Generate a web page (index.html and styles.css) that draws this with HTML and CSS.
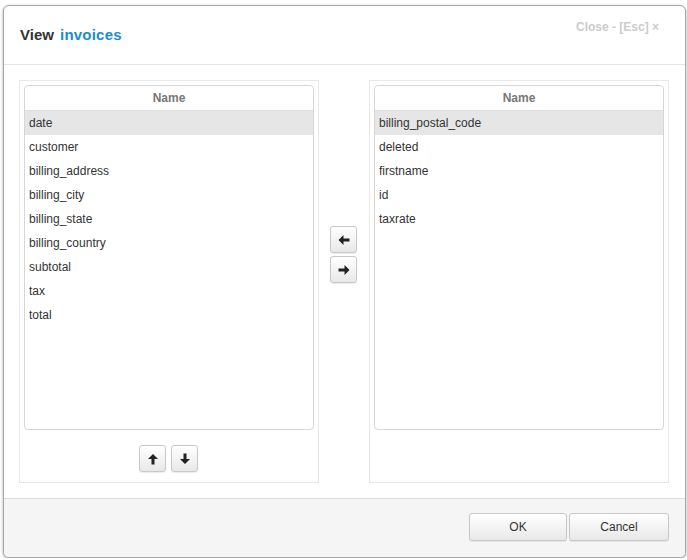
FILE: index.html
```html
<!DOCTYPE html>
<html>
<head>
<meta charset="utf-8">
<link rel="stylesheet" href="styles.css">
</head>
<body>
<div class="dialog">
  <div class="header">
    <h3 class="title">View <span class="entity">invoices</span></h3>
    <a class="close">Close - [Esc] ×</a>
  </div>
  <div class="body">
    <div class="panel">
      <div class="list">
        <div class="list-head">Name</div>
        <div class="row selected">date</div>
        <div class="row">customer</div>
        <div class="row">billing_address</div>
        <div class="row">billing_city</div>
        <div class="row">billing_state</div>
        <div class="row">billing_country</div>
        <div class="row">subtotal</div>
        <div class="row">tax</div>
        <div class="row">total</div>
      </div>
      <div class="panel-tools">
        <button class="btn icon"><svg width="12" height="12" viewBox="0 0 12 12"><path d="M6 1 L11 6 L7.5 6 L7.5 11.5 L4.5 11.5 L4.5 6 L1 6 Z" fill="#222"/></svg></button>
        <button class="btn icon"><svg width="12" height="12" viewBox="0 0 12 12"><path d="M6 11 L11 6 L7.5 6 L7.5 0.5 L4.5 0.5 L4.5 6 L1 6 Z" fill="#222"/></svg></button>
      </div>
    </div>
    <div class="middle">
      <button class="btn icon"><svg width="12" height="12" viewBox="0 0 12 12"><path d="M0.5 6 L5.5 1 L5.5 4.5 L11.5 4.5 L11.5 7.5 L5.5 7.5 L5.5 11 Z" fill="#222"/></svg></button>
      <button class="btn icon"><svg width="12" height="12" viewBox="0 0 12 12"><path d="M11.5 6 L6.5 1 L6.5 4.5 L0.5 4.5 L0.5 7.5 L6.5 7.5 L6.5 11 Z" fill="#222"/></svg></button>
    </div>
    <div class="panel">
      <div class="list">
        <div class="list-head">Name</div>
        <div class="row selected">billing_postal_code</div>
        <div class="row">deleted</div>
        <div class="row">firstname</div>
        <div class="row">id</div>
        <div class="row">taxrate</div>
      </div>
    </div>
  </div>
  <div class="footer">
    <button class="btn action ok">OK</button>
    <button class="btn action cancel">Cancel</button>
  </div>
</div>
</body>
</html>
```
FILE: styles.css
```css
* { box-sizing: border-box; }
html, body { margin: 0; padding: 0; background: #fff; }
body {
  font-family: "Liberation Sans", Arial, Helvetica, sans-serif;
  font-size: 12px;
  color: #333;
}
.dialog {
  margin: 5px 0 0 3px;
  width: 683px;
  height: 553px;
  border: 1px solid #a8a8a8;
  border-radius: 6px;
  box-shadow: 0 1px 3px rgba(0,0,0,0.35);
  background: #fff;
  display: flex;
  flex-direction: column;
  overflow: hidden;
}
.header {
  height: 59px;
  border-bottom: 1px solid #e5e5e5;
  display: flex;
  justify-content: space-between;
  align-items: flex-start;
  padding: 0 26px 0 16px;
  flex: none;
}
.title {
  margin: 20px 0 0 0;
  font-size: 15px;
  font-weight: bold;
  line-height: 18px;
  color: #333;
}
.entity { color: #1a8cd0; margin-left: 2px; letter-spacing: 0.2px; }
.close {
  margin-top: 14px;
  font-size: 12px;
  font-weight: bold;
  color: #cccccc;
  line-height: 15px;
}
.body {
  flex: 1;
  display: flex;
  padding: 15px 16px 15px 15px;
}
.panel {
  width: 300px;
  height: 403px;
  border: 1px solid #e8e8e8;
  padding: 4px;
  display: flex;
  flex-direction: column;
}
.list {
  height: 345px;
  border: 1px solid #d6d6d6;
  border-radius: 4px;
  overflow: hidden;
  flex: none;
}
.list-head {
  height: 25px;
  line-height: 24px;
  text-align: center;
  font-weight: bold;
  color: #777;
  border-bottom: 1px solid #dedede;
}
.row {
  height: 24px;
  line-height: 24px;
  padding-left: 4px;
  color: #333;
}
.row.selected { background: #e6e6e6; }
.panel-tools {
  display: flex;
  justify-content: center;
  gap: 5px;
  margin-top: 15px;
  padding-right: 1px;
}
.middle {
  width: 50px;
  display: flex;
  flex-direction: column;
  align-items: flex-start;
  justify-content: flex-start;
  padding: 146px 0 0 11px;
  gap: 3px;
}
.btn {
  font-family: inherit;
  border: 1px solid #c8c8c8;
  border-radius: 3px;
  background: linear-gradient(#ffffff, #e8e8e8);
  box-shadow: 0 1px 1px rgba(0,0,0,0.08);
  padding: 0;
  margin: 0;
  display: flex;
  align-items: center;
  justify-content: center;
  color: #333;
}
.btn.icon { width: 27px; height: 27px; }
.footer {
  height: 59px;
  flex: none;
  border-top: 1px solid #dddddd;
  background: #f5f5f5;
  display: flex;
  justify-content: flex-end;
  align-items: flex-start;
  padding: 14px 16px 0 0;
  gap: 2px;
}
.btn.action {
  height: 28px;
  font-size: 12px;
}
.btn.ok { width: 98px; }
.btn.cancel { width: 100px; }
```
